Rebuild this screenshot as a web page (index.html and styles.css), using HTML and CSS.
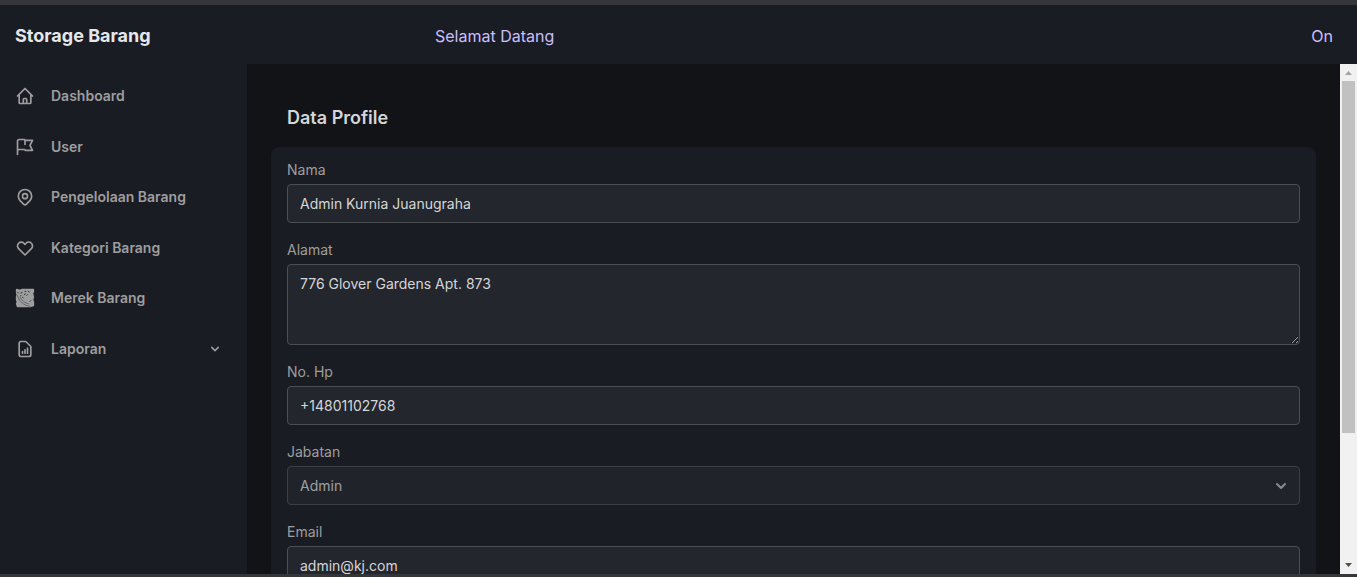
FILE: index.html
```html
<!DOCTYPE html>
<html lang="id">
<head>
<meta charset="utf-8">
<meta name="viewport" content="width=device-width, initial-scale=1">
<title>Storage Barang</title>
<link rel="stylesheet" href="styles.css">
</head>
<body>
<header class="topbar">
  <a class="brand" href="#">Storage Barang</a>
  <p class="welcome">Selamat Datang</p>
  <p class="status">On</p>
</header>
<div class="shell">
  <nav class="sidebar" aria-label="Menu">
    <ul class="menu">
      <li><a class="menu-link" href="#"><svg class="icon" viewBox="0 0 24 24"><path d="M3 12l2-2m0 0l7-7 7 7M5 10v10a1 1 0 001 1h3m10-11l2 2m-2-2v10a1 1 0 01-1 1h-3m-6 0a1 1 0 001-1v-4a1 1 0 011-1h2a1 1 0 011 1v4a1 1 0 001 1m-6 0h6"/></svg>Dashboard</a></li>
      <li><a class="menu-link" href="#"><svg class="icon" viewBox="0 0 24 24"><path d="M3 21v-4m0 0V5a2 2 0 012-2h6.500l1 1H21l-3 6 3 6h-8.500l-1-1H5a2 2 0 00-2 2zm9-13.500V9"/></svg>User</a></li>
      <li><a class="menu-link" href="#"><svg class="icon" viewBox="0 0 24 24"><path d="M17.657 16.657L13.414 20.900a1.998 1.998 0 01-2.827 0l-4.244-4.243a8 8 0 1111.314 0z"/><path d="M15 11a3 3 0 11-6 0 3 3 0 016 0z"/></svg>Pengelolaan Barang</a></li>
      <li><a class="menu-link" href="#"><svg class="icon" viewBox="0 0 24 24"><path d="M4.318 6.318a4.500 4.500 0 000 6.364L12 20.364l7.682-7.682a4.500 4.500 0 00-6.364-6.364L12 7.636l-1.318-1.318a4.500 4.500 0 00-6.364 0z"/></svg>Kategori Barang</a></li>
      <li><a class="menu-link" href="#"><svg class="icon" viewBox="0 0 24 24"><path class="patch" d="M2 2L6 3L8 2H22V4L21 7L22 11L21 14L22 17V21L19 22H3L2 19L3 17L2 14V10L3 8L2 6Z"/><path class="scratch" d="M3 9C4 15 10 21 18 22M6 11C8 15 12 18 16 19"/><path class="fleck" d="M7 6L8.500 5.500M7 9V9.500M11 8L12.500 7M12 4H13M16 4L17 4.500M15 8L14 9M9 11L10 12M18 16L19 15M3 5L4 6"/></svg>Merek Barang</a></li>
      <li><button class="menu-link" type="button"><svg class="icon" viewBox="0 0 24 24"><path d="M9 17v-2m3 2v-4m3 4v-6m2 10H7a2 2 0 01-2-2V5a2 2 0 012-2h5.586a1 1 0 01.707.293l5.414 5.414a1 1 0 01.293.707V19a2 2 0 01-2 2z"/></svg>Laporan<svg class="caret" viewBox="0 0 20 20"><path d="M5.293 7.293a1 1 0 011.414 0L10 10.586l3.293-3.293a1 1 0 111.414 1.414l-4 4a1 1 0 01-1.414 0l-4-4a1 1 0 010-1.414z"/></svg></button></li>
    </ul>
  </nav>
  <main class="content">
    <h1 class="title">Data Profile</h1>
    <form class="card">
      <div class="field"><label for="nama">Nama</label><input class="control" id="nama" type="text" value="Admin Kurnia Juanugraha"></div>
      <div class="field"><label for="alamat">Alamat</label><textarea class="control area" id="alamat">776 Glover Gardens Apt. 873</textarea></div>
      <div class="field"><label for="hp">No. Hp</label><input class="control" id="hp" type="tel" value="+14801102768"></div>
      <div class="field"><label for="jabatan">Jabatan</label>
        <div class="select-wrap"><select class="control" id="jabatan" disabled><option>Admin</option></select><svg class="select-caret" viewBox="0 0 20 20"><path d="M6 8l4 4 4-4"/></svg></div>
      </div>
      <div class="field"><label for="email">Email</label><input class="control" id="email" type="email" value="admin@kj.com"></div>
    </form>
  </main>
  <div class="scrollbar" aria-hidden="true">
    <svg class="arrow up" viewBox="0 0 17 17"><path d="M5 11h7L8.500 7z"/></svg>
    <div class="track"><div class="thumb"></div></div>
    <svg class="arrow down" viewBox="0 0 17 17"><path d="M5 6h7L8.500 10z"/></svg>
  </div>
</div>
</body>
</html>
```
FILE: styles.css
```css
*, *::before, *::after { box-sizing: border-box; }

body {
  display: flex;
  flex-direction: column;
  height: 100vh;
  margin: 0;
  overflow: hidden;
  border-top: 5px solid #35363a;
  border-bottom: 3px solid #35363a;
  background: #1a1c23;
  color: #d5d6d7;
  font: 14px/20px Inter, "Liberation Sans", sans-serif;
}

.topbar {
  display: grid;
  grid-template-columns: 420px 1fr auto;
  align-items: center;
  flex: none;
  height: 59px;
  padding: 2px 24px 0 15px;
  color: #cabffd;
  font-size: 16px;
  line-height: 24px;
}
.topbar p { margin: 0; }
.brand { color: #e5e7eb; font-size: 18px; font-weight: 700; text-decoration: none; }

.shell { display: flex; flex: 1; min-height: 0; }

.sidebar { flex: none; width: 247px; padding-top: 7px; }
.menu {
  display: grid;
  grid-template-rows: repeat(6, 1fr);
  height: 303px;
  margin: 0;
  padding: 0;
  list-style: none;
}
.menu-link {
  display: flex;
  align-items: center;
  width: 100%;
  height: 100%;
  padding: 0 24px 0 15px;
  border: 0;
  background: none;
  color: #9e9e9e;
  font: inherit;
  font-weight: 600;
  text-decoration: none;
}
.icon {
  width: 20px;
  height: 20px;
  margin-right: 16px;
  fill: none;
  stroke: currentColor;
  stroke-width: 2;
  stroke-linecap: round;
  stroke-linejoin: round;
}
.patch { fill: currentColor; }
.scratch { stroke: #5a5d66; stroke-width: 1; }
.fleck { stroke: #1a1c23; stroke-width: 1; }
.caret { width: 16px; height: 16px; margin-left: auto; fill: currentColor; }

.content {
  flex: 1;
  min-width: 0;
  overflow: hidden;
  padding: 40px 24px 24px;
  background: #121317;
}
.title { margin: 0 0 15px; padding-left: 16px; font-size: 18px; line-height: 28px; font-weight: 600; }
.card {
  display: flex;
  flex-direction: column;
  gap: 17px;
  padding: 13px 16px;
  border-radius: 8px;
  background: #1a1c23;
}
.field { display: flex; flex-direction: column; gap: 4px; color: #9e9e9e; }
.control {
  display: block;
  width: 100%;
  height: 39px;
  margin: 0;
  padding: 8px 12px;
  border: 1px solid #4c4f52;
  border-radius: 4px;
  background: #24262d;
  color: #d5d6d7;
  font: inherit;
  appearance: none;
}
.area { height: 81px; padding-top: 9px; resize: vertical; }
.select-wrap { display: grid; align-items: center; }
.select-wrap > * { grid-area: 1 / 1; }
.select-wrap .control { opacity: 0.7; color: #d5d6d7; }
.select-caret {
  z-index: 1;
  justify-self: end;
  width: 20px;
  height: 20px;
  margin-right: 9px;
  fill: none;
  stroke: #858b98;
  stroke-width: 2;
  stroke-linecap: round;
  stroke-linejoin: round;
  pointer-events: none;
}

.scrollbar { display: flex; flex-direction: column; flex: none; width: 17px; background: #f1f1f1; }
.arrow { width: 17px; height: 17px; }
.up { fill: #a3a3a3; }
.down { fill: #505050; }
.track { flex: 1; padding: 0 2px; }
.thumb { height: 74%; background: #c1c1c1; }
```
